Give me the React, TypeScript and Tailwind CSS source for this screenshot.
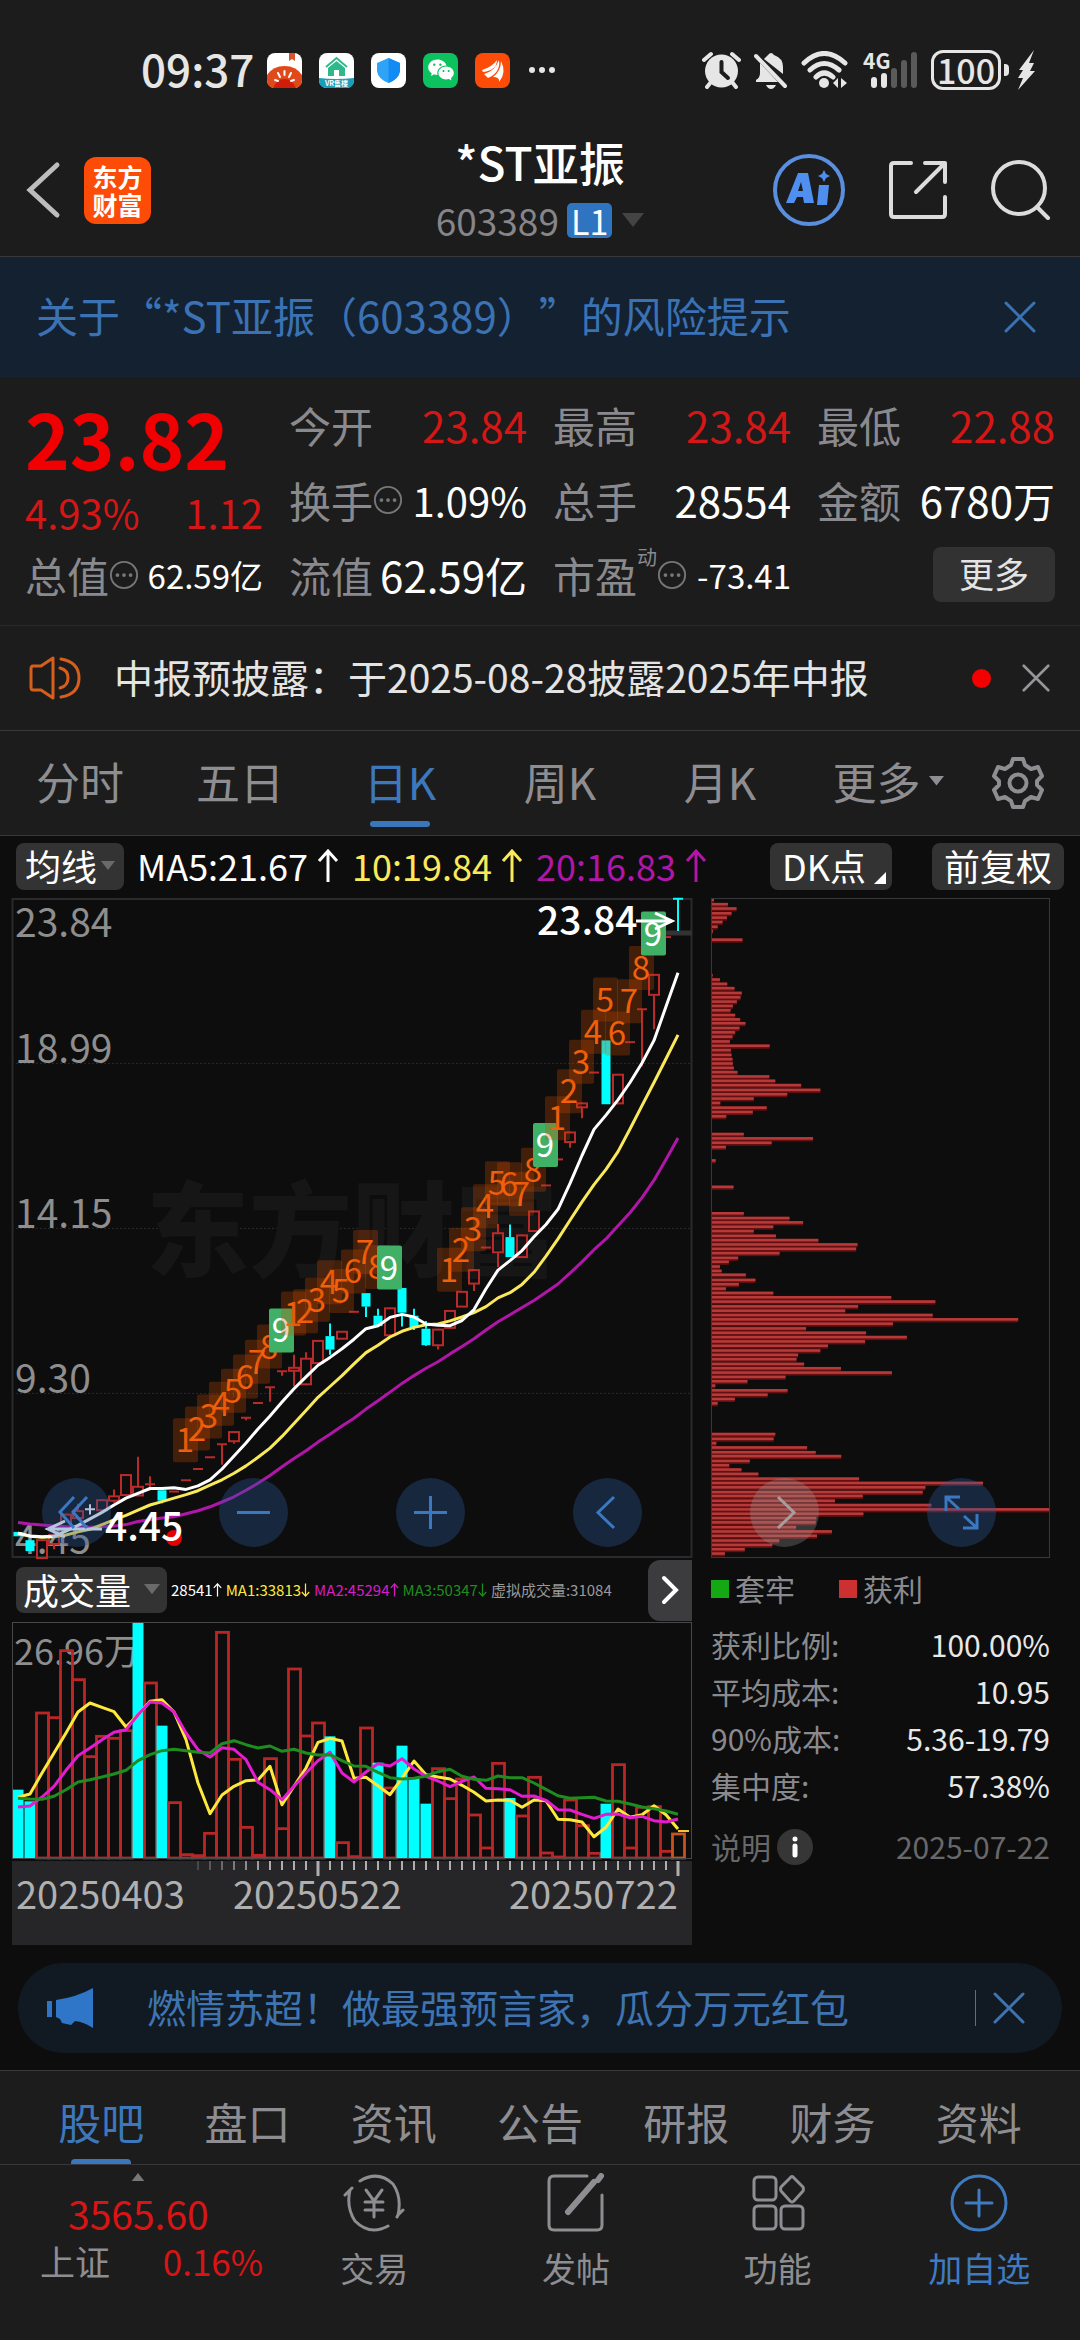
import type { ReactNode } from "react";
import { RiWechatFill } from "react-icons/ri";

/* ---------- chart data ---------- */

// [high, body top, body bottom, low, colour] on the plot's 20..1540 vertical scale
type Candle = [number, number, number, number, "r" | "c" | "w"];
const CANDLES: Candle[] = [
  [1480, 1480, 1490, 1490, "c"], [1499, 1499, 1524, 1524, "c"], [1497, 1499, 1540, 1540, "r"],
  [1475, 1487, 1508, 1520, "r"], [1438, 1440, 1470, 1470, "r"], [1415, 1432, 1448, 1452, "r"],
  [1416, 1428, 1428, 1440, "w"], [1405, 1407, 1430, 1430, "r"], [1382, 1398, 1408, 1413, "r"],
  [1347, 1349, 1395, 1395, "r"], [1307, 1376, 1396, 1397, "r"], [1352, 1370, 1370, 1384, "r"],
  [1384, 1384, 1408, 1414, "c"], [1387, 1387, 1387, 1387, "r"], [1361, 1361, 1361, 1361, "r"],
  [1335, 1335, 1335, 1335, "r"], [1308, 1308, 1308, 1308, "r"], [1278, 1278, 1278, 1325, "r"],
  [1248, 1250, 1271, 1277, "r"], [1217, 1217, 1217, 1223, "r"], [1183, 1183, 1183, 1183, "r"],
  [1147, 1147, 1147, 1180, "r"], [1110, 1110, 1110, 1120, "r"], [1072, 1102, 1109, 1145, "r"],
  [1066, 1081, 1140, 1142, "r"], [1038, 1040, 1091, 1092, "r"], [1000, 1029, 1060, 1072, "c"],
  [1018, 1019, 1035, 1036, "r"], [973, 973, 973, 973, "r"], [930, 930, 961, 985, "c"],
  [966, 982, 1006, 1007, "c"], [963, 965, 1027, 1028, "r"], [918, 918, 975, 1007, "c"],
  [966, 982, 1008, 1015, "c"], [994, 1012, 1050, 1052, "c"], [1012, 1014, 1050, 1060, "r"],
  [970, 971, 1010, 1012, "r"], [925, 927, 961, 961, "r"], [875, 877, 908, 925, "r"],
  [825, 825, 825, 825, "r"], [771, 792, 836, 870, "r"], [772, 801, 847, 847, "c"],
  [795, 797, 847, 848, "r"], [740, 742, 787, 787, "r"], [682, 682, 682, 682, "r"],
  [622, 622, 622, 622, "r"], [558, 560, 582, 595, "r"], [491, 493, 502, 527, "r"],
  [422, 422, 422, 422, "r"], [348, 348, 495, 495, "c"], [425, 427, 493, 495, "r"],
  [352, 352, 352, 352, "r"], [276, 276, 276, 408, "r"], [195, 197, 243, 322, "r"],
  [110, 110, 110, 110, "r"], [22, 22, 22, 96, "c"],
];

const MA5 = [
  1483, 1489, 1491, 1490, 1478, 1465, 1450, 1435, 1418, 1402, 1391, 1380, 1380, 1378, 1382, 1374, 1360, 1335, 1305,
  1275, 1243, 1213, 1181, 1150, 1123, 1096, 1078, 1058, 1036, 1012, 1005, 986, 979, 985, 1001, 1004, 1005, 993, 968,
  920, 877, 855, 832, 800, 772, 737, 677, 613, 553, 520, 485, 445, 400, 348, 270, 192,
];
const MA10 = [
  1483, 1490, 1492, 1491, 1487, 1480, 1474, 1463, 1452, 1442, 1430, 1418, 1410, 1402, 1394, 1385, 1372, 1360, 1345,
  1328, 1308, 1287, 1260, 1230, 1200, 1170, 1145, 1120, 1093, 1067, 1050, 1031, 1018, 1009, 1003, 1001, 994, 985, 975,
  961, 941, 929, 910, 882, 845, 805, 762, 720, 680, 645, 604, 552, 498, 445, 390, 335,
];
const MA20 = [
  1458, 1462, 1464, 1466, 1468, 1470, 1469, 1468, 1466, 1463, 1456, 1452, 1448, 1445, 1438, 1431, 1422, 1411, 1399,
  1384, 1368, 1350, 1330, 1311, 1293, 1273, 1255, 1236, 1218, 1197, 1178, 1158, 1138, 1120, 1103, 1088, 1070, 1053,
  1035, 1015, 996, 980, 963, 947, 928, 909, 884, 858, 830, 805, 775, 745, 710, 670, 622, 573,
];

// Runs of sequential counts: the first candle's index, then a height for each count from 1 to 9
const COUNTS: [number, number[]][] = [
  [14, [1269, 1242, 1214, 1185, 1155, 1122, 1088, 1053, 1016]],
  [23, [977, 972, 945, 905, 925, 880, 835, 870, 871]],
  [36, [876, 830, 783, 730, 677, 679, 701, 646, 589]],
  [45, [527, 465, 397, 328, 254, 332, 258, 181, 102]],
];

// Top of each volume bar on the panel's 187..898 scale; falling days are filled
const VOLUME = [
  690, 725, 457, 471, 270, 357, 588, 527, 533, 510, 189, 367, 498, 726, 882, 885, 818, 215, 596, 800, 884, 594, 804,
  325, 526, 487, 530, 846, 888, 502, 609, 682, 558, 655, 732, 624, 714, 655, 763, 862, 608, 715, 766, 650, 877, 889,
  718, 795, 878, 732, 612, 862, 740, 738, 872, 820,
];
const FALLING = [0, 1, 10, 12, 26, 30, 32, 33, 34, 41, 49];
const VMA1 = [
  713, 703, 640, 580, 520, 457, 430, 443, 456, 502, 465, 425, 420, 457, 540, 670, 762, 706, 680, 663, 661, 620, 735,
  680, 625, 548, 536, 544, 656, 653, 678, 705, 655, 604, 645, 652, 658, 677, 698, 724, 721, 722, 743, 721, 723, 779,
  780, 787, 831, 803, 748, 773, 765, 738, 765, 808,
];
const VMA2 = [
  742, 739, 712, 680, 632, 588, 565, 540, 518, 510, 465, 427, 430, 457, 520, 570, 592, 564, 569, 600, 668, 690, 720,
  680, 640, 603, 578, 640, 667, 637, 612, 619, 597, 628, 650, 664, 681, 665, 652, 686, 687, 690, 710, 709, 722, 750,
  751, 764, 776, 764, 763, 774, 770, 783, 787, 778,
];
const VMA3 = [
  716, 718, 719, 710, 690, 667, 660, 652, 643, 632, 603, 585, 573, 569, 573, 578, 580, 552, 543, 555, 565, 559, 575,
  569, 580, 586, 585, 603, 619, 620, 638, 654, 658, 656, 649, 636, 629, 650, 659, 662, 649, 654, 654, 670, 689, 708,
  716, 714, 713, 724, 725, 733, 742, 747, 754, 764,
];

// [height, right end] of each cost bar; every bar starts at 63
const CHIPS: [number, number][] = [
  [22, 69], [32, 111], [42, 137], [53, 122], [63, 108], [73, 95], [84, 80], [94, 66], [114, 155], [196, 65], [206, 87],
  [216, 109], [226, 131], [237, 153], [247, 149], [257, 138], [267, 126], [277, 119], [288, 133], [298, 148],
  [307, 164], [318, 146], [328, 133], [338, 125], [349, 117], [359, 237], [369, 120], [380, 122], [390, 125],
  [400, 126], [410, 129], [420, 140], [430, 236], [440, 254], [450, 332], [461, 390], [471, 290], [481, 189],
  [491, 88], [502, 228], [512, 186], [522, 106], [563, 159], [573, 368], [583, 243], [593, 105], [624, 74],
  [685, 128], [746, 159], [757, 297], [767, 338], [777, 248], [787, 189], [798, 256], [808, 384], [818, 502],
  [828, 498], [838, 267], [849, 142], [858, 114], [869, 87], [879, 92], [888, 165], [900, 194], [910, 144],
  [920, 105], [930, 248], [940, 604], [950, 737], [961, 504], [971, 465], [981, 729], [991, 987], [1001, 609],
  [1012, 347], [1022, 528], [1032, 651], [1042, 525], [1052, 413], [1063, 390], [1073, 323], [1083, 318],
  [1094, 341], [1104, 452], [1114, 606], [1124, 285], [1134, 170], [1144, 73], [1155, 291], [1165, 231],
  [1175, 132], [1185, 80], [1256, 254], [1267, 249], [1277, 76], [1287, 350], [1298, 376], [1307, 453], [1318, 177],
  [1328, 115], [1338, 152], [1348, 203], [1359, 507], [1369, 881], [1379, 707], [1390, 699], [1399, 518],
  [1410, 434], [1420, 725], [1430, 1080], [1440, 520], [1450, 378], [1460, 376], [1471, 317], [1481, 425],
  [1491, 380], [1502, 266], [1512, 245], [1522, 162], [1532, 102],
];

const cx = (i: number) => 6 + i * 12;
const py = (v: number) => ((v - 20) * 660) / 1520;
const vy = (v: number) => (v - 187) / 3;
const line = (data: number[], y: (v: number) => number) =>
  data.map((v, i) => `${cx(i)},${y(v).toFixed(1)}`).join(" ");

const INK = { r: "#b92a2a", c: "#00ffff", w: "#ffffff" };

/* ---------- small pieces ---------- */

function Cross({ className }: { className: string }) {
  return (
    <svg viewBox="0 0 32 32" className={className} fill="none" stroke="currentColor" strokeWidth="3" strokeLinecap="round" aria-hidden="true">
      <path d="M2 2 30 30M30 2 2 30" />
    </svg>
  );
}

function Arrow({ down = false, className }: { down?: boolean; className: string }) {
  return (
    <svg viewBox="0 0 22 34" className={className} fill="none" stroke="currentColor" strokeWidth="3" aria-hidden="true">
      <path d={down ? "M11 1V32M2 22 11 32 20 22" : "M11 33V2M2 12 11 2 20 12"} />
    </svg>
  );
}

function Dots() {
  return (
    <svg viewBox="0 0 32 32" className="size-[30px] shrink-0 text-[#77777a]" aria-hidden="true">
      <circle cx="16" cy="16" r="14" fill="none" stroke="currentColor" strokeWidth="2" />
      <g fill="currentColor">
        <circle cx="9" cy="16" r="2" />
        <circle cx="16" cy="16" r="2" />
        <circle cx="23" cy="16" r="2" />
      </g>
    </svg>
  );
}

function Caret({ className }: { className: string }) {
  return (
    <svg viewBox="0 0 22 14" className={className} fill="currentColor" aria-hidden="true">
      <path d="M0 0H22L11 14Z" />
    </svg>
  );
}

/* ---------- status bar and header ---------- */

function StatusBar() {
  return (
    <div className="flex items-center justify-between pt-[42px] pb-[35px] pl-[141px] pr-[45px] text-[#e6e6e6]">
      <div className="flex h-14 items-center gap-[17px]">
        <span className="-mr-1 pb-1 text-[44px] font-medium leading-[52px]">09:37</span>
        <svg viewBox="0 0 35 35" className="size-[35px]" aria-hidden="true">
          <rect width="35" height="35" rx="8" fill="#fff" />
          <path d="M22 0h6v8l-3-2-3 2Z" fill="#d8542b" />
          <path d="M0 22Q6 13 17.500 13T35 22V27Q35 35 27 35H8Q0 35 0 27Z" fill="#e04a1b" />
          <path d="M6 35Q10 26 17.500 26T29 35Z" fill="#cf1d0a" />
          <path d="M17.500 18v4M11 20l2 4M24 20l-2 4M8 27l3 1M27 27l-3 1" stroke="#fff" strokeWidth="2" strokeLinecap="round" />
        </svg>
        <svg viewBox="0 0 35 35" className="size-[35px]" aria-hidden="true">
          <rect width="35" height="35" rx="8" fill="#fff" />
          <path d="M0 25Q17 27 35 25V27Q35 35 27 35H8Q0 35 0 27Z" fill="#1a9db8" />
          <path d="M7 14 17.500 5 28 14" fill="none" stroke="#35b88c" strokeWidth="2" />
          <path d="M9 15 17.500 8 26 15V23H20V17H15V23H9Z" fill="#2fb98a" />
          <text x="17.500" y="33" fontSize="7" fontWeight="700" textAnchor="middle" fill="#fff">VR售楼</text>
        </svg>
        <svg viewBox="0 0 35 35" className="size-[35px]" aria-hidden="true">
          <rect width="35" height="35" rx="8" fill="#fff" />
          <path d="M17.500 5 29 10V18Q28 26 17.500 30 7 26 6 18V10Z" fill="#2fa4f7" />
          <path d="M17.500 5 29 10V18Q28 26 17.500 30Z" fill="#128bf5" />
        </svg>
        <span className="flex size-[35px] items-center justify-center rounded-lg bg-[#0bc25f]">
          <RiWechatFill className="size-7 text-white" aria-hidden="true" />
        </span>
        <svg viewBox="0 0 35 35" className="size-[35px]" aria-hidden="true">
          <rect width="35" height="35" rx="8" fill="#fd4b08" />
          <path d="M7 17Q17 14 22 7 22 17 8 19ZM9 21Q20 18 24 7 26 19 13 25ZM24 29Q25 24 18 24 26 18 26 8 32 20 24 29Z" fill="#fff" />
        </svg>
        <svg viewBox="0 0 28 6" className="w-7" fill="currentColor" aria-hidden="true">
          <circle cx="5" cy="3" r="3" />
          <circle cx="15" cy="3" r="3" />
          <circle cx="25" cy="3" r="3" />
        </svg>
      </div>
      <div className="flex items-center">
        <svg viewBox="0 0 39 38" className="mr-[13px] w-[39px]" aria-hidden="true">
          <circle cx="19.500" cy="20" r="16.500" fill="currentColor" />
          <path d="M2 9 9 3M37 9 30 3M9 31 5 36M30 31 34 36" stroke="currentColor" strokeWidth="4" strokeLinecap="round" />
          <path d="M19.500 11V21L26 27" fill="none" stroke="#1c1c1c" strokeWidth="4" strokeLinecap="round" />
        </svg>
        <svg viewBox="0 0 33 38" className="mr-[14px] w-[33px]" fill="currentColor" aria-hidden="true">
          <path d="M6 12 24 31H2V29Q6 27 6 22ZM10 8Q13 5 14 4 17 0 20 4 29 7 29 16V23ZM12 34H22Q20 38 17 38T12 34Z" />
          <path d="M2 5 31 35" stroke="currentColor" strokeWidth="4" strokeLinecap="round" />
        </svg>
        <svg viewBox="0 0 48 38" className="mr-[14px] w-12" fill="none" stroke="currentColor" strokeWidth="5" strokeLinecap="round" aria-hidden="true">
          <path d="M3 12Q23 -7 44 12M9 19Q23 6 38 19M15 26Q23 18 32 26" />
          <circle cx="23" cy="32" r="5" fill="currentColor" stroke="none" />
          <path d="M37 27v10l-5-5ZM40 27v10l6-5Z" fill="currentColor" stroke="none" />
        </svg>
        <svg viewBox="0 0 54 38" className="mr-[14px] w-[54px] overflow-visible" aria-hidden="true">
          <text x="0" y="18" fontSize="21" fontWeight="700" fill="currentColor">4G</text>
          <g strokeWidth="6" strokeLinecap="round" stroke="currentColor">
            <path d="M11 29V34M21 25V34" />
            <path d="M31 20V34M41 12V34M51 4V34" stroke="#5a5a5a" />
          </g>
        </svg>
        <span className="flex h-10 w-[70px] items-center justify-center rounded-xl border-[3px] border-[#e6e6e6] text-[34px] font-medium leading-none">
          100
        </span>
        <span className="ml-[3px] h-3 w-[5px] rounded-r bg-[#e6e6e6]" />
        <svg viewBox="0 0 18 40" className="ml-2 w-[18px]" fill="currentColor" aria-hidden="true">
          <path d="M17 0 2 20H6L1 28H6L1 40 18 21H13L17 13H12Z" />
        </svg>
      </div>
    </div>
  );
}

function Header() {
  return (
    <header className="grid grid-cols-[1fr_auto_1fr] items-center border-b border-[#38383a] pb-[9px]">
      <div className="flex items-center pl-6">
        <button aria-label="返回" className="text-[#bdbdbd]">
          <svg viewBox="0 0 38 58" className="w-[38px]" fill="none" stroke="currentColor" strokeWidth="5" strokeLinecap="round">
            <path d="M33 4 6 29 33 54" />
          </svg>
        </button>
        <span className="ml-[22px] grid size-[67px] place-content-center rounded-xl bg-[#fd4b08] text-center text-[25px] font-bold leading-[28px] text-white">
          东方
          <br />
          财富
        </span>
      </div>
      <div className="flex flex-col items-center">
        <h1 className="pb-1 text-[46px] font-medium leading-[56px] text-white">*ST亚振</h1>
        <button className="flex items-center text-[37px] leading-[54px] text-[#85858a]">
          603389
          <span className="ml-2 rounded-[5px] bg-[#2f74c0] px-1 text-[34px] leading-[35px] text-white">L1</span>
          <Caret className="ml-2.5 w-[22px] text-[#444]" />
        </button>
      </div>
      <div className="flex items-center justify-end pr-[29px] text-[#dcdcdc]">
        <button aria-label="AI">
          <svg viewBox="0 0 72 72" className="w-[72px]">
            <circle cx="36" cy="36" r="34" fill="none" stroke="#5a8fe0" strokeWidth="4" />
            <path fillRule="evenodd" d="M25 19H35L41 49H31L30 43H24L21 49H13ZM28 28 25 37H30Z" fill="#4f8ff0" />
            <path d="M46 31H56L54 51H44ZM51 16 53 20 57 22 53 24 51 28 49 24 45 22 49 20Z" fill="#4f8ff0" />
          </svg>
        </button>
        <button aria-label="分享" className="ml-[43px]">
          <svg viewBox="0 0 60 60" className="w-[60px]" fill="none" stroke="currentColor" strokeWidth="4" strokeLinecap="round" strokeLinejoin="round">
            <path d="M23 3H6Q3 3 3 6V54Q3 57 6 57H54Q57 57 57 54V37M37 3H57V22M57 3 28 32" />
          </svg>
        </button>
        <button aria-label="搜索" className="ml-[43px]">
          <svg viewBox="0 0 60 60" className="w-[60px]" fill="none" stroke="currentColor" strokeWidth="4" strokeLinecap="round">
            <circle cx="28" cy="28" r="26" />
            <path d="M46 47 57 58" />
          </svg>
        </button>
      </div>
    </header>
  );
}

/* ---------- quote ---------- */

function Quote({ label, value, tone = "text-white", size = "text-[42px]", dots = false, sup }: {
  label: string;
  value: string;
  tone?: string;
  size?: string;
  dots?: boolean;
  sup?: string;
}) {
  return (
    <div className="flex h-[75px] items-center justify-between whitespace-nowrap">
      <dt className="flex items-center text-[42px] text-[#8a8a8e]">
        {label}
        {sup && <span className="mb-9 text-xl leading-none">{sup}</span>}
        {dots && <Dots />}
      </dt>
      <dd className={`${size} ${tone}`}>{value}</dd>
    </div>
  );
}

function QuotePanel() {
  return (
    <section className="border-b border-[#29292b] px-[25px] pt-[10px] pb-[13px]">
      <dl className="grid grid-cols-4 gap-x-[26px] leading-[56px]">
        <div className="flex flex-col">
          <div className="flex h-[100px] items-center text-[76px] font-bold text-[#f00000]">23.82</div>
          <div className="flex h-[50px] items-center justify-between text-[40px] text-[#d41616]">
            <span>4.93%</span>
            <span>1.12</span>
          </div>
          <Quote label="总值" value="62.59亿" size="text-[33px]" dots />
        </div>
        <div>
          <Quote label="今开" value="23.84" tone="text-[#d41616]" />
          <Quote label="换手" value="1.09%" size="text-[40px]" dots />
          <Quote label="流值" value="62.59亿" />
        </div>
        <div>
          <Quote label="最高" value="23.84" tone="text-[#d41616]" />
          <Quote label="总手" value="28554" />
          <Quote label="市盈" value="-73.41" size="text-[33px]" dots sup="动" />
        </div>
        <div>
          <Quote label="最低" value="22.88" tone="text-[#d41616]" />
          <Quote label="金额" value="6780万" />
          <div className="flex h-[75px] items-center justify-end">
            <button className="rounded-lg bg-[#323233] px-[26px] pb-1 text-[35px] leading-[51px] text-[#e4e4e4]">更多</button>
          </div>
        </div>
      </dl>
    </section>
  );
}

/* ---------- charts ---------- */

function Legend({ color, arrow, children }: { color: string; arrow?: "up" | "down"; children: ReactNode }) {
  return (
    <span className={`flex items-center ${color}`}>
      {children}
      {arrow && <Arrow down={arrow === "down"} className="ml-[9px] w-[22px]" />}
    </span>
  );
}

function PriceChart() {
  return (
    <svg viewBox="0 0 680 660" className="block h-auto w-full overflow-visible" role="img" aria-label="日K线">
      <rect x="0.500" y="1" width="679" height="658" fill="none" stroke="#2a2a2c" strokeWidth="2" />
      <g stroke="#29292b" strokeDasharray="2 2">
        {[401, 781, 1161].map((v) => (
          <path key={v} d={`M0 ${py(v)}H680`} />
        ))}
      </g>
      <text x="134" y="371" fontSize="103" fontWeight="900" fill="#161617">东方财富</text>
      <g fontSize="39" fill="#8e8e8e">
        <text x="3" y="39">23.84</text>
        <text x="3" y="165">18.99</text>
        <text x="3" y="330">14.15</text>
        <text x="3" y="495">9.30</text>
        <text x="3" y="656">4.45</text>
      </g>
      <path d="M654 35H680" stroke="#333" strokeWidth="5" />
      {CANDLES.map(([high, top, bottom, low, c], i) => {
        const x = cx(i);
        const ink = INK[c];
        if (top === bottom) {
          return <path key={i} d={`M${x - 5} ${py(top)}H${x + 5}M${x} ${py(high)}V${py(low)}`} stroke={ink} strokeWidth="2" fill="none" />;
        }
        return (
          <g key={i} stroke={ink} strokeWidth="2" fill={c === "c" ? ink : "none"}>
            <path d={`M${x} ${py(high)}V${py(top)}M${x} ${py(bottom)}V${py(low)}`} />
            {c === "c" ? (
              <rect x={x - 4.5} y={py(top)} width="9" height={py(bottom) - py(top)} stroke="none" />
            ) : (
              <rect x={x - 5} y={py(top)} width="10" height={Math.max(py(bottom) - py(top), 2)} />
            )}
          </g>
        );
      })}
      <g fill="none" strokeWidth="3" strokeLinejoin="round">
        <polyline points={line(MA20, py)} stroke="#b016a8" />
        <polyline points={line(MA10, py)} stroke="#fbe95c" />
        <polyline points={line(MA5, py)} stroke="#fff" />
      </g>
      {COUNTS.map(([start, ys]) =>
        ys.map((v, k) => {
          const x = cx(start + k) - 1;
          const y = py(v);
          const nine = k === 8;
          return (
            <g key={`${start}-${k}`}>
              <rect x={x - 12} y={y - 22} width="25" height="44" rx="2" fill={nine ? "#3fb065" : "#d24a00"} fillOpacity={nine ? 1 : 0.28} />
              <text x={x} y={y + 12} fontSize="33" textAnchor="middle" fill={nine ? "#fff" : "#f2600c"}>
                {k + 1}
              </text>
            </g>
          );
        }),
      )}
      <circle cx="162" cy="640" r="8" fill="#e60000" />
      <g fontSize="39" fontWeight="500" fill="#fff">
        <text x="525" y="37">23.84</text>
        <text x="93" y="643">4.45</text>
      </g>
      <path d="M624 23H660M643 15 660 23 643 31M90 631H36M53 623 36 631 53 639" fill="none" stroke="#fff" strokeWidth="3" />
    </svg>
  );
}

function ChipChart() {
  return (
    <svg viewBox="63 20 1017 1520" preserveAspectRatio="none" className="h-full w-full border border-[#38383a]" role="img" aria-label="筹码分布">
      {CHIPS.map(([y, x]) => (
        <g key={y}>
          <rect x="63" y={y - 3} width={x - 63} height="10" fill="#640f10" />
          <rect x="63" y={y - 3} width={x - 63} height="6" fill="#b63a3a" />
        </g>
      ))}
    </svg>
  );
}

function VolumeChart() {
  return (
    <svg viewBox="0 0 680 323" className="block h-auto w-full" role="img" aria-label="成交量图">
      <rect x="0" y="239" width="680" height="84" fill="#262628" />
      <text x="2" y="43" fontSize="36" fill="#8e8e8e">26.96万</text>
      {VOLUME.map((v, i) => {
        const x = cx(i);
        if (FALLING.includes(i)) {
          return <rect key={i} x={x - 5.5} y={vy(v)} width="11" height={236 - vy(v)} fill="#00ffff" />;
        }
        return (
          <rect key={i} x={x - 5.5} y={vy(v) + 1} width="12" height={Math.max(235 - vy(v), 1)} fill="none" stroke={i === 55 ? "#c9521d" : "#ba2626"} strokeWidth="2.800" />
        );
      })}
      <path d="M666 209H677" stroke="#f6c52c" strokeWidth="2" />
      <g fill="none" strokeWidth="3" strokeLinejoin="round">
        <polyline points={line(VMA1, vy)} stroke="#ffe83c" />
        <polyline points={line(VMA2, vy)} stroke="#e41cd0" />
        <polyline points={line(VMA3, vy)} stroke="#1f8c1f" />
      </g>
      <rect x="0.500" y="0.500" width="679" height="236" fill="none" stroke="#48484a" />
      {Array.from({ length: 41 }, (_, k) => k + 15).map((i) => {
        const major = i === 25 || i === 55;
        return (
          <path key={i} d={`M${cx(i)} 239V${major ? 254 : 248}`} stroke="#aeaeae" strokeWidth={major ? 3 : 2} opacity={Math.min(1, (i - 13) / 8)} />
        );
      })}
      <g fontSize="38" fill="#b0b0b0">
        <text x="4" y="287">20250403</text>
        <text x="221" y="287">20250522</text>
        <text x="497" y="287">20250722</text>
      </g>
    </svg>
  );
}

function RoundButton({ label, muted = false, children }: { label: string; muted?: boolean; children: ReactNode }) {
  return (
    <button
      aria-label={label}
      className={`size-[69px] rounded-full ${muted ? "bg-[#999]/30 text-[#a89c9c]" : "bg-[#2a5a9a]/35 text-[#3a78c2]"}`}
    >
      <svg viewBox="0 0 69 69" className="size-full" fill="none" stroke="currentColor" strokeWidth="3">
        {children}
      </svg>
    </button>
  );
}

function Stat({ label, value }: { label: string; value: string }) {
  return (
    <div className="flex justify-between leading-[47px]">
      <dt className="text-[#8a8a8e]">{label}:</dt>
      <dd className="text-[#e8e8e8]">{value}</dd>
    </div>
  );
}

function ChartArea() {
  return (
    <section className="bg-[#0d0d0d]">
      <div className="flex items-center pt-[7px] pr-4 pb-2 pl-4 text-4xl">
        <button className="flex items-center gap-1 rounded-lg bg-[#333334] px-[9px] pb-0.5 leading-[45px] text-white">
          均线
          <Caret className="w-[14px] text-[#6a6a6a]" />
        </button>
        <div className="ml-[13px] flex gap-[13px] pb-0.5 leading-[45px]">
          <Legend color="text-white" arrow="up">MA5:21.67</Legend>
          <Legend color="text-[#fbe95c]" arrow="up">10:19.84</Legend>
          <Legend color="text-[#b016a8]" arrow="up">20:16.83</Legend>
        </div>
        <button className="ml-auto flex items-end rounded-lg bg-[#333334] pr-1.5 pb-0.5 pl-3 leading-[45px] text-white">
          DK点
          <svg viewBox="0 0 12 12" className="mb-1 ml-2 w-3" fill="currentColor" aria-hidden="true">
            <path d="M12 0V12H0Z" />
          </svg>
        </button>
        <button className="ml-10 rounded-lg bg-[#333334] px-3 pb-0.5 leading-[45px] text-white">前复权</button>
      </div>

      <div className="relative grid grid-cols-[680fr_339fr] gap-x-[19px] pr-[30px] pl-3">
        <PriceChart />
        <div className="relative">
          <div className="absolute inset-0">
            <ChipChart />
          </div>
        </div>
        <div className="absolute right-[84px] bottom-[11px] left-[42px] flex justify-between">
          <RoundButton label="最早"><path d="M32 19 18 34 32 50M45 19 31 34 45 50" /></RoundButton>
          <RoundButton label="缩小"><path d="M18 34.500H51" /></RoundButton>
          <RoundButton label="放大"><path d="M18 34.500H51M34.500 18V51" /></RoundButton>
          <RoundButton label="向左"><path d="M41 19 25 34.500 41 50" /></RoundButton>
          <RoundButton label="向右" muted><path d="M28 19 44 34.500 28 50" /></RoundButton>
          <RoundButton label="全屏">
            <path d="M19 33V19H33M19 19 32 31M50 36V50H36M50 50 37 38" />
          </RoundButton>
        </div>
      </div>

      <div className="grid grid-cols-[680fr_339fr] gap-x-[19px] pr-[30px] pl-3">
        <div>
          <div className="flex h-16 items-center justify-between">
            <div className="flex items-center pl-1">
              <button className="flex items-center gap-[13px] rounded-lg bg-[#333334] px-[7px] pb-0.5 text-4xl leading-[44px] text-white">
                成交量
                <Caret className="w-4 text-[#6a6a6a]" />
              </button>
              <div className="ml-1 flex gap-1 text-[15px] leading-5 whitespace-nowrap">
                <span className="flex items-center text-white">28541<Arrow className="w-[9px]" /></span>
                <span className="flex items-center text-[#ffe83c]">MA1:33813<Arrow down className="w-[9px]" /></span>
                <span className="flex items-center text-[#d81cc8]">MA2:45294<Arrow className="w-[9px]" /></span>
                <span className="flex items-center text-[#1f8c1f]">MA3:50347<Arrow down className="w-[9px]" /></span>
                <span className="text-[#9a9a9a]">虚拟成交量:31084</span>
              </div>
            </div>
            <button aria-label="展开指标" className="flex h-[61px] w-11 items-center justify-center rounded-l-xl bg-[#3c3c3e] text-white">
              <svg viewBox="0 0 18 30" className="w-[18px]" fill="none" stroke="currentColor" strokeWidth="4" strokeLinecap="round">
                <path d="M3 3 15 15 3 27" />
              </svg>
            </button>
          </div>
          <VolumeChart />
        </div>
        <div className="text-[30px]">
          <div className="mb-0.5 flex h-[61px] items-center text-[#8a8a8e]">
            <span className="mr-[6px] size-[18px] bg-[#14a814]" />
            套牢
            <span className="mr-[6px] ml-11 size-[18px] bg-[#cc3030]" />
            获利
          </div>
          <dl>
            <Stat label="获利比例" value="100.00%" />
            <Stat label="平均成本" value="10.95" />
            <Stat label="90%成本" value="5.36-19.79" />
            <Stat label="集中度" value="57.38%" />
          </dl>
          <div className="mt-[14px] flex items-center leading-[47px] text-[#68686a]">
            说明
            <button aria-label="说明详情" className="ml-[6px]">
              <svg viewBox="0 0 36 36" className="size-9">
                <circle cx="18" cy="18" r="18" fill="#363637" />
                <path d="M18 17V26M18 10V10" stroke="#fff" strokeWidth="5" strokeLinecap="round" />
              </svg>
            </button>
            <time className="ml-auto">2025-07-22</time>
          </div>
        </div>
      </div>

      <div className="mx-[18px] mt-[18px] flex items-center rounded-full bg-[#111a22] py-[21px] pr-[37px] pl-[29px] text-[39px] leading-[44px] text-[#3f74b2]">
        <svg viewBox="0 0 46 40" className="w-[46px]" fill="#3076c8" aria-hidden="true">
          <path d="M0 13H5V29H0ZM9 12Q30 9 46 0V40Q37 34 28 33L24 37 15 35 13 31 9 29Z" />
        </svg>
        <a href="#activity" className="ml-[54px] pb-1">燃情苏超！做最强预言家，瓜分万元红包</a>
        <span className="ml-auto h-9 w-px bg-[#3f74b2]" />
        <button aria-label="关闭活动" className="ml-[17px]">
          <Cross className="w-8" />
        </button>
      </div>
      <div className="h-[17px]" />
    </section>
  );
}

/* ---------- bottom ---------- */

function BottomItem({ label, active = false, children }: { label: string; active?: boolean; children: ReactNode }) {
  return (
    <button className={`flex flex-col items-center pt-2 text-[34px] leading-[44px] ${active ? "text-[#3f7bc0]" : "text-[#8e8e92]"}`}>
      <svg viewBox="0 0 64 60" className="mb-[13px] w-16" fill="none" stroke="currentColor" strokeWidth="3" strokeLinecap="round" strokeLinejoin="round" aria-hidden="true">
        {children}
      </svg>
      {label}
    </button>
  );
}

const PERIODS = ["分时", "五日", "日K", "周K", "月K"];
const SECTIONS = ["股吧", "盘口", "资讯", "公告", "研报", "财务", "资料"];

export default function App() {
  return (
    <div lang="zh-CN" className="flex min-h-screen flex-col bg-[#1c1c1c] font-['Noto_Sans_CJK_SC',sans-serif] [text-spacing-trim:space-all]">
      <StatusBar />
      <Header />

      <div className="flex items-center justify-between bg-[#142131] py-9 pr-11 pl-9 text-[42px] leading-[44px] text-[#3a72b4]">
        <a href="#risk" className="pb-1">关于“*ST亚振（603389）”的风险提示</a>
        <button aria-label="关闭提示">
          <Cross className="w-8" />
        </button>
      </div>

      <QuotePanel />

      <div className="flex items-center border-b border-[#38383a] py-7 pr-[30px] pl-[29px] text-[39px] leading-[44px] text-[#e4e4e4]">
        <svg viewBox="0 0 52 44" className="w-[52px] text-[#d65f1c]" fill="none" stroke="currentColor" strokeWidth="3" strokeLinejoin="round" aria-hidden="true">
          <path d="M24 2 12 10H4Q2 10 2 13V31Q2 34 4 34H12L24 42Z" />
          <path d="M31 12Q39 14 39 22T31 32M32 3Q50 6 50 22T32 41" strokeLinecap="round" />
        </svg>
        <a href="#notice" className="ml-[33px] pb-1">中报预披露：于2025-08-28披露2025年中报</a>
        <span className="ml-auto size-[19px] rounded-full bg-[#f50000]" />
        <button aria-label="关闭公告" className="ml-[31px] text-[#96969a]">
          <Cross className="w-7" />
        </button>
      </div>

      <nav className="flex items-center border-b border-[#38383a] pr-5 text-[44px] leading-[44px] text-[#8e8e92]">
        {PERIODS.map((name) => (
          <button key={name} className={`relative flex-[160] pt-7 pb-8 ${name === "日K" ? "text-[#3d78bd]" : ""}`}>
            {name}
            {name === "日K" && <span className="absolute bottom-2 left-1/2 h-1.5 w-[60px] -translate-x-1/2 rounded-full bg-[#3a76bb]" />}
          </button>
        ))}
        <button className="flex flex-[176] items-center justify-center gap-2 pt-7 pb-8">
          更多
          <Caret className="w-[15px]" />
        </button>
        <button aria-label="设置" className="flex flex-[84] justify-center">
          <svg viewBox="0 0 52 54" className="w-[52px]" fill="none" stroke="currentColor" strokeWidth="4" strokeLinejoin="round">
            <path d="M21 3H31L33 9 39 13 46 11 50 20 45 25V29L50 34 46 43 39 41 33 45 31 51H21L19 45 13 41 6 43 2 34 7 29V25L2 20 6 11 13 13 19 9Z" />
            <circle cx="26" cy="27" r="8.500" />
          </svg>
        </button>
      </nav>

      <ChartArea />

      <nav className="flex border-y border-[#38383a] px-7 text-[43px] leading-[44px] text-[#8e8e92]">
        {SECTIONS.map((name, i) => (
          <button key={name} className={`relative flex-1 pt-7 pb-[21px] ${i === 0 ? "text-[#3d78bd]" : ""}`}>
            {name}
            {i === 0 && <span className="absolute bottom-0 left-1/2 h-[5px] w-[60px] -translate-x-1/2 rounded-t bg-[#3a76bb]" />}
          </button>
        ))}
      </nav>

      <footer className="grid flex-1 grid-cols-[274fr_202fr_202fr_202fr_202fr] items-start">
        <button className="flex flex-col pt-2 pl-10 text-left text-[#d81414]">
          <Caret className="ml-[87px] h-2 w-[22px] rotate-180 text-[#77777a]" />
          <span className="mt-2 ml-[28px] text-[39px] leading-[48px]">3565.60</span>
          <span className="flex w-[223px] justify-between text-[35px] leading-[48px]">
            <span className="text-[#8e8e92]">上证</span>
            0.16%
          </span>
        </button>
        <BottomItem label="交易">
          <path d="M18 8Q36 -3 51 11 60 24 56 42L61 37M46 53Q28 63 13 48 4 34 8 17L3 22M56 42 55 44M8 17 10 15" />
          <path d="M24 17 32 28 40 17M32 28V44M23 29H41M23 37H41" />
        </BottomItem>
        <BottomItem label="发帖">
          <path d="M43 3H10Q5 3 5 8V52Q5 57 10 57H53Q58 57 58 52V22" />
          <path d="M24 39 50 9M57 3 54 7" strokeWidth="6" />
        </BottomItem>
        <BottomItem label="功能">
          <rect x="8" y="4" width="22" height="23" rx="4" />
          <rect x="8" y="33" width="22" height="23" rx="4" />
          <rect x="35" y="33" width="22" height="23" rx="4" />
          <path d="M44 5Q46 2 48 5L57 14Q58 16 57 18L48 28Q46 30 44 28L35 18Q34 16 35 14Z" />
        </BottomItem>
        <BottomItem label="加自选" active>
          <circle cx="32" cy="30" r="27" />
          <path d="M19 30H45M32 17V43" />
        </BottomItem>
      </footer>
    </div>
  );
}
